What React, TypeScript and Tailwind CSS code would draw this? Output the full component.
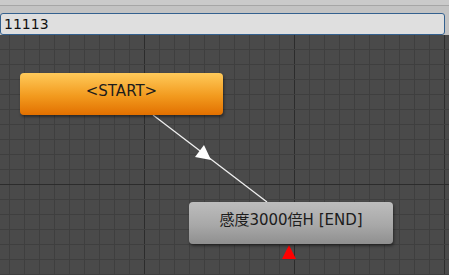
import React from "react";

export default function App() {
  const minorV: number[] = [];
  for (let x = 9; x < 449; x += 15) minorV.push(x);
  const minorH: number[] = [];
  for (let y = 34; y < 280; y += 15) minorH.push(y);
  return (
    <div className="w-[449px] h-[275px] overflow-hidden flex flex-col bg-[#c3c3c3]" style={{ fontFamily: '"DejaVu Sans", "Noto Sans CJK JP", sans-serif' }}>
      <div className="h-[13px] flex flex-col shrink-0">
        <div className="h-[5px] bg-[#cacaca]" />
        <div className="h-[1px] bg-[#a6a6a6]" />
        <div className="flex-1 bg-[#c3c3c3]" />
      </div>
      <div className="h-[22px] shrink-0 flex pr-[4px] bg-[#c3c3c3]">
        <div className="flex-1 border border-[#34618f] rounded-[3px] bg-[#dfdfdf] flex items-center pl-[3px] text-[14px] text-[#111111] leading-none">
          11113
        </div>
      </div>
      <div className="relative flex-1 bg-[#4a4a4a] overflow-hidden">
        <svg className="absolute inset-0" width="449" height="240" viewBox="0 35 449 240">
          {minorV.map((x) => (
            <line key={"v" + x} x1={x + 0.5} y1={35} x2={x + 0.5} y2={275} stroke={(x + 6) % 150 === 0 ? "#2c2c2c" : "#3f3f3f"} strokeWidth={1} />
          ))}
          {minorH.map((y) => (
            <line key={"h" + y} x1={0} y1={y + 0.5} x2={449} y2={y + 0.5} stroke={(y - 34) % 150 === 0 ? "#2c2c2c" : "#3f3f3f"} strokeWidth={1} />
          ))}
          <line x1={153} y1={115} x2={267} y2={202} stroke="#f0f0f0" strokeWidth={1.3} />
          <polygon points="204,145 195,157 211,160" fill="#ffffff" />
          <polygon points="289,245 282,259 296,259" fill="#ff0000" />
        </svg>
        <div className="absolute left-[20px] top-[38px] w-[203px] h-[42px] rounded-[4px] bg-[linear-gradient(to_bottom,#ffca5a,#f29a1e_55%,#e27000)] shadow-[1px_2px_3px_rgba(0,0,0,0.45)] flex items-center justify-center text-[15px] text-[#1c1c1c] pb-[6px]">
          &lt;START&gt;
        </div>
        <div className="absolute left-[189px] top-[167px] w-[204px] h-[42px] rounded-[4px] bg-[linear-gradient(to_bottom,#bdbdbd,#a8a8a8_55%,#8f8f8f)] shadow-[1px_2px_3px_rgba(0,0,0,0.45)] flex items-center justify-center text-[15px] text-[#1c1c1c] pb-[6px]">
          感度3000倍H [END]
        </div>
      </div>
    </div>
  );
}
